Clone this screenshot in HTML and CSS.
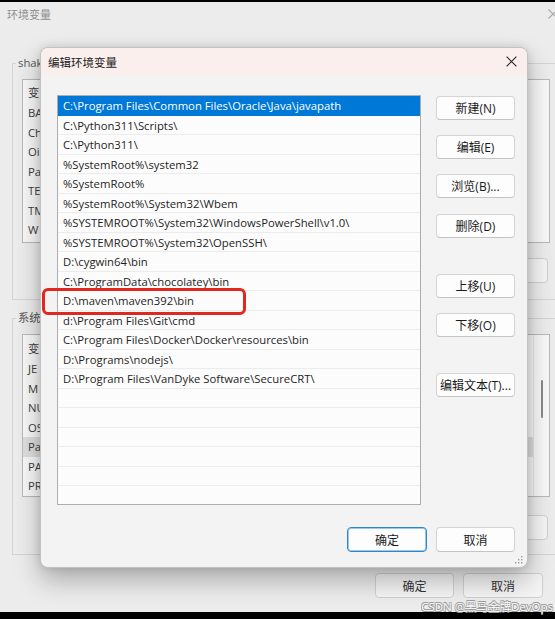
FILE: index.html
```html
<!DOCTYPE html>
<html lang="zh-CN">
<head>
<meta charset="utf-8">
<title>编辑环境变量</title>
<link rel="stylesheet" href="styles.css">
</head>
<body>
<div class="screen">
  <div class="win">
    <div class="win-title">
      <span>环境变量</span>
      <svg class="win-close" width="10" height="10" viewBox="0 0 10 10"><path d="M0.5 0.5 L9.5 9.5 M9.5 0.5 L0.5 9.5" stroke="#a8a8a8" stroke-width="1.1" fill="none"/></svg>
    </div>

    <fieldset class="group g1">
      <legend><span class="lg">shak</span></legend>
      <div class="blist l1">
        <div class="bhead"><span class="c1">变</span></div>
        <div class="brow"><span class="c1">BA</span></div>
        <div class="brow"><span class="c1">Ch</span></div>
        <div class="brow"><span class="c1">Oi</span></div>
        <div class="brow"><span class="c1">Pa</span></div>
        <div class="brow"><span class="c1">TE</span></div>
        <div class="brow"><span class="c1">TM</span></div>
        <div class="brow"><span class="c1">W</span></div>
      </div>
      <div class="bbtns">
        <button class="bbtn" title="新建"></button>
        <button class="bbtn" title="编辑"></button>
        <button class="bbtn" title="删除"></button>
      </div>
    </fieldset>

    <fieldset class="group g2">
      <legend><span class="lg">系统</span></legend>
      <div class="blist l2">
        <div class="bcol">
          <div class="bhead"><span class="c1">变</span></div>
          <div class="brow"><span class="c1">JE</span></div>
          <div class="brow"><span class="c1">M</span></div>
          <div class="brow"><span class="c1">NU</span></div>
          <div class="brow"><span class="c1">OS</span></div>
          <div class="brow selg"><span class="c1">Pa</span></div>
          <div class="brow"><span class="c1">PA</span></div>
          <div class="brow"><span class="c1">PR</span></div>
        </div>
        <div class="vscroll"><div class="thumb"></div></div>
      </div>
      <div class="bbtns b2">
        <button class="bbtn" title="新建"></button>
        <button class="bbtn" title="编辑"></button>
        <button class="bbtn" title="删除"></button>
      </div>
    </fieldset>

    <div class="win-foot">
      <button class="bbtn f1">确定</button>
      <button class="bbtn f2">取消</button>
    </div>

    <div class="dialog">
      <div class="dlg-title">
        <span>编辑环境变量</span>
        <svg class="dlg-close" width="11" height="11" viewBox="0 0 11 11"><path d="M0.6 0.6 L10.4 10.4 M10.4 0.6 L0.6 10.4" stroke="#2a2a2a" stroke-width="1.15" fill="none"/></svg>
      </div>
      <div class="dlg-body">
        <div class="plist">
          <div class="prow sel">C:\Program Files\Common Files\Oracle\Java\javapath</div>
          <div class="prow">C:\Python311\Scripts\</div>
          <div class="prow">C:\Python311\</div>
          <div class="prow">%SystemRoot%\system32</div>
          <div class="prow">%SystemRoot%</div>
          <div class="prow">%SystemRoot%\System32\Wbem</div>
          <div class="prow">%SYSTEMROOT%\System32\WindowsPowerShell\v1.0\</div>
          <div class="prow">%SYSTEMROOT%\System32\OpenSSH\</div>
          <div class="prow">D:\cygwin64\bin</div>
          <div class="prow">C:\ProgramData\chocolatey\bin</div>
          <div class="prow">D:\maven\maven392\bin</div>
          <div class="prow">d:\Program Files\Git\cmd</div>
          <div class="prow">C:\Program Files\Docker\Docker\resources\bin</div>
          <div class="prow">D:\Programs\nodejs\</div>
          <div class="prow">D:\Program Files\VanDyke Software\SecureCRT\</div>
          <div class="prow"></div>
          <div class="prow"></div>
          <div class="prow"></div>
          <div class="prow"></div>
          <div class="prow"></div>
          <div class="prow"></div>
        </div>
        <div class="pbtns">
          <button class="pbtn m1">新建(N)</button>
          <button class="pbtn m2">编辑(E)</button>
          <button class="pbtn m2">浏览(B)...</button>
          <button class="pbtn m3">删除(D)</button>
          <button class="pbtn m4">上移(U)</button>
          <button class="pbtn m2">下移(O)</button>
          <button class="pbtn m4">编辑文本(T)...</button>
        </div>
      </div>
      <div class="dlg-foot">
        <button class="pbtn ok">确定</button>
        <button class="pbtn">取消</button>
      </div>
      <div class="mark"></div>
      <svg class="grip" width="8" height="8" viewBox="0 0 8 8">
        <rect x="6" y="0" width="1.4" height="1.4" fill="#9a9a9a"/>
        <rect x="3" y="3" width="1.4" height="1.4" fill="#9a9a9a"/>
        <rect x="6" y="3" width="1.4" height="1.4" fill="#9a9a9a"/>
        <rect x="0" y="6" width="1.4" height="1.4" fill="#9a9a9a"/>
        <rect x="3" y="6" width="1.4" height="1.4" fill="#9a9a9a"/>
        <rect x="6" y="6" width="1.4" height="1.4" fill="#9a9a9a"/>
      </svg>
    </div>
  </div>
  <div class="wm">CSDN @黑马金牌DevOps</div>
</div>
</body>
</html>
```

FILE: styles.css
```css
* { box-sizing: border-box; }
html, body { margin: 0; background: #000; }
body {
  font-family: "Open Sans", "Noto Sans CJK SC", sans-serif;
  font-size: 11.3px;
  color: #1b1b1b;
}
button { font-family: "Open Sans", "Noto Sans CJK SC", sans-serif; padding: 0; cursor: default; }

.screen { position: relative; width: 555px; height: 619px; overflow: hidden; background: #000; }
.win { position: relative; margin-top: 2px; height: 610px; background: #ececec; }

.win-title {
  height: 24px; display: flex; align-items: center; justify-content: space-between;
  padding-left: 7px; color: #8e8e8e; font-size: 11px;
}
.win-close { margin-right: -3px; }

.group {
  margin: 29px 0 0 12px; padding: 8px 5px 16px 9px;
  border: 1px solid #d4d4d4; border-right: none; min-width: 0;
}
.group legend { margin-left: -6px; padding: 0 2px; line-height: 16px; color: #555; font-size: 11.3px; }
.lg { display: block; white-space: nowrap; }
.g2 { margin-top: 10px; padding-bottom: 14px; }

.blist { background: #f8f8f8; border: 1px solid #b9b9b9; height: 164px; padding-top: 3px; color: #3c3c3c; overflow: hidden; }
.l2 { height: 163px; padding-top: 4px; display: flex; }
.bcol { flex: 1; }
.bhead { height: 20px; line-height: 20px; padding-left: 5px; display: flex; }
.brow { height: 19.5px; line-height: 19.5px; padding-left: 5px; display: flex; white-space: nowrap; }
.c1 { white-space: nowrap; }
.brow.selg { background: #dedede; }
.vscroll { width: 16px; border-left: 1px solid #e6e6e6; margin-top: -4px; }
.thumb { width: 2px; height: 38px; margin: 45px auto 0; background: #8a8a8a; border-radius: 1px; }

.bbtns { display: flex; justify-content: flex-end; gap: 9px; margin-top: 15px; padding-right: 2px; }
.b2 { margin-top: 18px; }
.bbtn {
  width: 80px; height: 25px; border: 1px solid #d0d0d0; border-radius: 4px;
  background: #f4f4f4; font-size: 12px; color: #333;
}

.win-foot { display: flex; justify-content: flex-end; gap: 9px; margin-top: 18px; padding-right: 12px; }
.win-foot .f1 { width: 79px; }

.dialog {
  position: absolute; left: 40px; top: 45px; width: 488px; height: 521px;
  background: #f3f3f3; border: 1px solid #c2c2c2; border-radius: 8px;
  box-shadow: 0 12px 26px rgba(0,0,0,0.28), 0 0 8px rgba(0,0,0,0.12);
}
.dlg-title {
  height: 27px; display: flex; align-items: center; justify-content: space-between;
  padding: 0 10px 0 7px; background: #fbefed; border-radius: 7px 7px 0 0;
  font-size: 11.5px; color: #1a1a1a;
}
.dlg-body { display: flex; padding: 20px 12px 0 16px; }
.plist {
  width: 364px; height: 410px; background: #fcfcfc; border: 1px solid #adadad;
  overflow: hidden; color: #1e1e1e;
}
.prow {
  height: 19.5px; line-height: 19px; padding-left: 5px; white-space: nowrap;
  border-bottom: 1px solid #ececec;
}
.prow.sel { background: #0078d7; color: #fff; border-bottom-color: #0078d7; }

.pbtns { display: flex; flex-direction: column; margin-left: 15px; width: 79px; }
.pbtn {
  width: 79px; height: 24px; border: 1px solid #d4d4d4; border-bottom-color: #c4c4c4;
  border-radius: 4px; background: #fdfdfd; font-size: 12px; color: #1a1a1a;
}
.m1 { margin-top: 1px; }
.m2 { margin-top: 15px; }
.m3 { margin-top: 16px; }
.m4 { margin-top: 36px; }

.dlg-foot { display: flex; justify-content: flex-end; gap: 9px; margin-top: 22px; padding-right: 12px; }
.dlg-foot .pbtn { height: 25px; }
.dlg-foot .ok { width: 80px; border: 1px solid #2e87cc; box-shadow: inset 0 0 0 1px #9cc7e8; }

.mark {
  position: absolute; left: 1px; top: 240px; width: 204px; height: 27px;
  border: 3px solid #e2281c; border-radius: 6px;
}
.grip { position: absolute; right: 4px; bottom: 3px; }

.wm {
  position: absolute; right: 2px; top: 600px; font-size: 11.5px; line-height: 14px;
  font-family: "Open Sans", "Noto Sans CJK SC", sans-serif;
  color: #fafafa;
  text-shadow: 0.6px 0.6px 0 #9a9a9a, -0.6px -0.6px 0 #9a9a9a, 0.6px -0.6px 0 #9a9a9a, -0.6px 0.6px 0 #9a9a9a;
}
```
